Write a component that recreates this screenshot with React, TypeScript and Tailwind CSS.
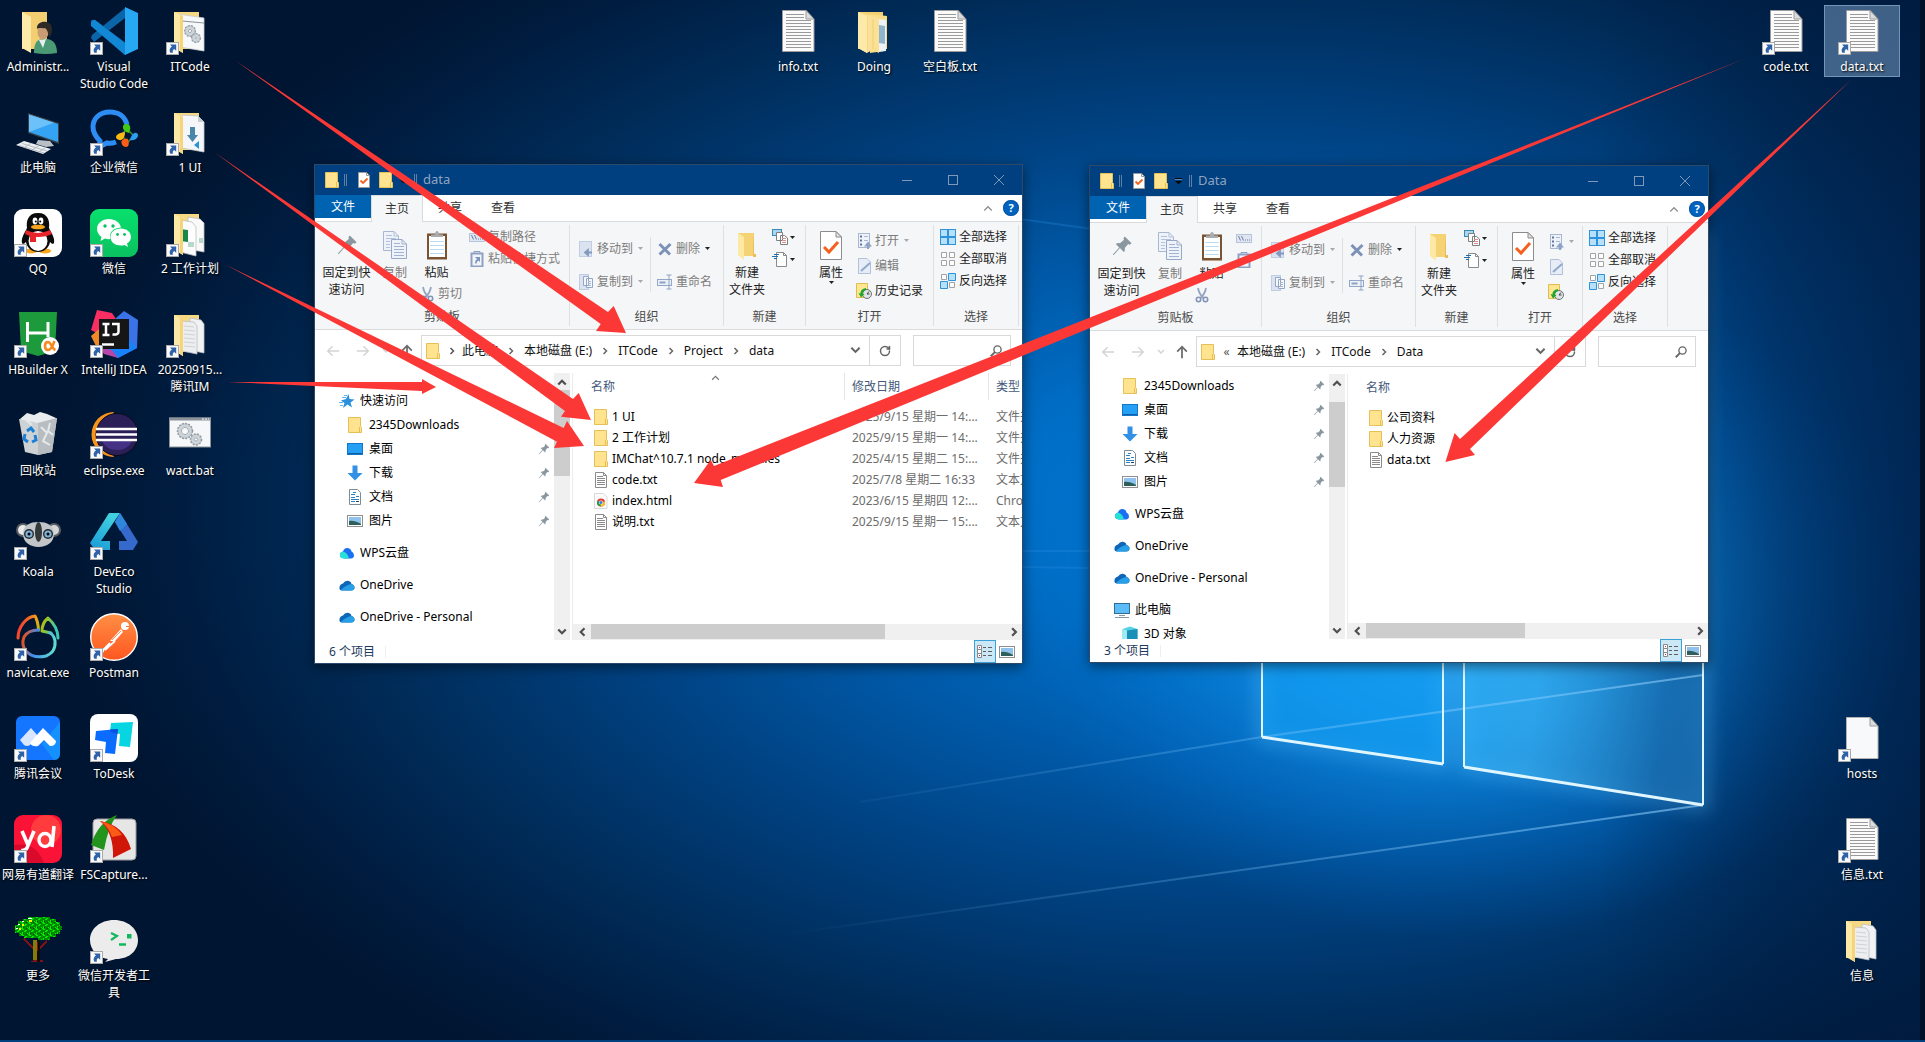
import React from "react";
import { RotateCw } from "lucide-react";

type P = { className?: string };

/* ---------- wallpaper ---------- */

function Wallpaper() {
  return (
    <svg className="absolute inset-0 h-full w-full" viewBox="0 0 1925 1042" preserveAspectRatio="none" aria-hidden="true">
      <defs>
        <radialGradient id="wpBase" gradientUnits="userSpaceOnUse" cx="0" cy="0" r="1" gradientTransform="translate(1240 510) scale(1190 700)">
          <stop offset="0" stopColor="#007bd9" />
          <stop offset="0.2" stopColor="#006ec6" />
          <stop offset="0.38" stopColor="#0058a6" />
          <stop offset="0.55" stopColor="#004282" />
          <stop offset="0.75" stopColor="#002c59" />
          <stop offset="0.9" stopColor="#001c3f" />
          <stop offset="1" stopColor="#001531" />
        </radialGradient>
        <radialGradient id="wpGlow" gradientUnits="userSpaceOnUse" cx="0" cy="0" r="1" gradientTransform="translate(1460 600) scale(460 340)">
          <stop offset="0" stopColor="#2aaaf6" />
          <stop offset="0.4" stopColor="#108fe6" stopOpacity="0.85" />
          <stop offset="0.75" stopColor="#0474cf" stopOpacity="0.38" />
          <stop offset="1" stopColor="#0060b5" stopOpacity="0" />
        </radialGradient>
        <linearGradient id="wpRight" gradientUnits="userSpaceOnUse" x1="1600" x2="1925" y1="0" y2="0">
          <stop offset="0" stopColor="#001c42" stopOpacity="0" />
          <stop offset="0.55" stopColor="#001c42" stopOpacity="0.45" />
          <stop offset="1" stopColor="#001c42" stopOpacity="0.7" />
        </linearGradient>
        <linearGradient id="beam" gradientUnits="userSpaceOnUse" x1="780" x2="1703" y1="0" y2="0">
          <stop offset="0" stopColor="#7cc4ff" stopOpacity="0" />
          <stop offset="1" stopColor="#8fd0ff" stopOpacity="0.6" />
        </linearGradient>
        <linearGradient id="paneR" x1="0" x2="1" y1="0" y2="0.3">
          <stop offset="0" stopColor="#27aefa" stopOpacity="0.7" />
          <stop offset="0.5" stopColor="#3fb4f2" stopOpacity="0.6" />
          <stop offset="1" stopColor="#1b70b2" stopOpacity="0.8" />
        </linearGradient>
        <filter id="soft" x="-30%" y="-30%" width="160%" height="160%">
          <feGaussianBlur stdDeviation="9" />
        </filter>
      </defs>
      <rect width="1925" height="1042" fill="#001531" />
      <rect width="1925" height="1042" fill="url(#wpBase)" />
      <rect width="1925" height="1042" fill="url(#wpGlow)" />
      <rect x="1600" width="325" height="1042" fill="url(#wpRight)" />
      <g stroke="#6cc8ff" strokeWidth="10" fill="none" opacity="0.4" filter="url(#soft)">
        <path d="M1262 260V737L1443 764V260M1464 260V767L1703 805V230" />
      </g>
      <path d="M1262 260V737L1443 764V250Z" fill="#12a0f5" fillOpacity="0.6" />
      <path d="M1464 250V767L1703 805V220Z" fill="url(#paneR)" />
      <g stroke="url(#beam)" strokeWidth="2" fill="none">
        <path d="M780 935L1703 805" />
        <path d="M860 802L1262 737L1703 675" />
      </g>
      <g stroke="#2a8fe0" strokeOpacity="0.3" strokeWidth="2" fill="none">
        <path d="M1020 219L1092 229M1020 551H1092M1020 567L1092 568" />
      </g>
      <g stroke="#dff6ff" strokeWidth="2" fill="none">
        <path d="M1262 260V737M1443 764V250M1464 250V767M1703 805V220" />
        <path d="M1262 737L1443 764M1464 767L1703 805" strokeWidth="3" />
      </g>
      <rect x="1920" width="5" height="1040" fill="#001029" />
      <rect y="1040" width="1925" height="2" fill="#00407c" />
    </svg>
  );
}

/* ---------- desktop icons, 48 x 48 ---------- */

const Big = ({ children }: { children: React.ReactNode }) => (
  <svg className="h-12 w-12" viewBox="0 0 48 48" aria-hidden="true">{children}</svg>
);

const Badge = () => (
  <svg className="absolute bottom-0 left-0 h-[13px] w-[13px]" viewBox="0 0 13 13" aria-hidden="true">
    <rect x="0.5" y="0.5" width="12" height="12" fill="#fafafa" stroke="#a9a9a9" />
    <path d="M4 2.5H10.2V8.700L8.200 6.900C6.800 7.800 6.500 9 6.900 10.800H4.300C3 8.200 3.600 6 5.900 4.500Z" fill="#2f62a8" />
  </svg>
);

const gear = (cx: number, cy: number, r: number, w: number) => (
  <g fill="none" stroke="#8f9aa3">
    <circle cx={cx} cy={cy} r={r} strokeWidth={w} strokeDasharray="1.6 1.4" />
    <circle cx={cx} cy={cy} r={r - 1.500} strokeWidth="3" stroke="#cdd4d9" />
    <circle cx={cx} cy={cy} r={r - 3.400} strokeWidth="0.8" />
    <circle cx={cx} cy={cy} r={r + 0.200} strokeWidth="0.600" />
  </g>
);

const FolderBase = ({ children }: { children?: React.ReactNode }) => (
  <Big>
    <path d="M8 5H33V42H8Z" fill="#f7d983" />
    {children}
    <path d="M8 5L17 9V46L8 41Z" fill="#fde9a6" />
    <path d="M8 5L17 9V46L14 44V8Z" fill="#f6d47a" />
  </Big>
);

const icons: Record<string, React.ReactNode> = {
  admin: (
    <Big>
      <path d="M8 5H33V42H8Z" fill="#f3cf72" />
      <path d="M8 5L17 10V46L8 41Z" fill="#fdeaaa" />
      <path d="M20 46C20 37 22 33 28 32C36 31 43 34 43 46Q32 48 20 46Z" fill="#4a9a76" />
      <path d="M25 33L29 41L32 32Z" fill="#e8eef0" />
      <ellipse cx="29" cy="25" rx="5.500" ry="7.500" fill="#c79c72" />
      <path d="M23 22C22 13 38 12 38 22C38 26 37 29 35 30C34 25 33 22 31 21C28 22 25 20 23 22Z" fill="#2c2926" />
    </Big>
  ),
  vscode: (
    <Big>
      <path d="M1 15Q1 12 5 13L37 37L35 48L2 19Z" fill="#0a7bc4" />
      <path d="M1 31L4 35L35 11V1L2 28Z" fill="#0a66a9" />
      <path d="M1 15L5 13L37 38L35 48L1 19Z" fill="#1287d3" />
      <path d="M35 0L48 6V42L35 48Z" fill="#27a8f3" />
    </Big>
  ),
  itcode: (
    <FolderBase>
      <path d="M12 7L38 11V44L14 40Z" fill="#f7f8f9" stroke="#c8ccd0" strokeWidth="0.800" />
      <path d="M16 14L38 16" stroke="#8b9298" />
      {gear(24, 24, 5, 2)}{gear(30, 31, 4, 2)}
    </FolderBase>
  ),
  ui: (
    <FolderBase>
      <path d="M16 7L32 8L38 14V44L16 40Z" fill="#f4f6f9" stroke="#c2c7cc" strokeWidth="0.800" />
      <path d="M32 8V14H38Z" fill="#c7cbd0" />
      <path d="M24 19H29V27H32L26.500 34L21 27H24Z" fill="#4a86a8" />
      <path d="M28 37L33 33V41Z" fill="#2894d2" />
    </FolderBase>
  ),
  plan: (
    <FolderBase>
      <path d="M22 8L34 10L38 14V43L22 40Z" fill="#fafafa" stroke="#b9bec3" strokeWidth="0.800" />
      <path d="M14 11L26 13L30 18V47L14 43Z" fill="#fdfdfd" stroke="#b9bec3" strokeWidth="0.800" />
      <path d="M14 20L22 21V33L14 32Z" fill="#17884a" />
      <path d="M22 33H28V38H22ZM33 29H37V34H33Z" fill="#b8d8cb" />
    </FolderBase>
  ),
  docs: (
    <FolderBase>
      <path d="M24 8L35 10L38 14V43L24 40Z" fill="#f1f2f3" stroke="#babfc4" strokeWidth="0.800" />
      <path d="M16 11L28 12L31 16V44L16 41Z" fill="#eceeef" stroke="#b9bec3" strokeWidth="0.800" />
      <path d="M18 16L28 17M18 20L29 21M18 24L29 25M18 28L29 29M18 32L29 33M18 36L29 37" stroke="#d0d3d6" />
    </FolderBase>
  ),
  doing: (
    <Big>
      <path d="M8 5H33V42H8Z" fill="#f3cf72" />
      <path d="M20 7L37 9V42H34V44L20 46Z" fill="#f9dc85" />
      <path d="M28 12L36 13V44L28 45Z" fill="#edf2f6" />
      <path d="M29 18L35 19V37L29 36Z" fill="#8fb5cc" />
      <path d="M8 5L29 11V46L27 45V40L17 46V46L8 41Z" fill="#fbe197" />
      <path d="M17 10V45M23 12V42" stroke="#eec96a" strokeWidth="0.800" />
      <path d="M8 5L17 10V46L8 41Z" fill="#fdeaaa" />
    </Big>
  ),
  pc: (
    <Big>
      <path d="M14 5L45 15V36L14 25Z" fill="#3a4248" />
      <path d="M15 6.500L44 16V34L15 24Z" fill="#35a3f4" />
      <path d="M15 6.500L40 14.700L15 24Z" fill="#6cc1fb" />
      <path d="M24 32L36 33L40 38L32 39L22 36Z" fill="#b9bfc4" />
      <path d="M2 37L10 33L37 41L29 46Z" fill="#eceff1" />
      <path d="M5 37.500L30 45M8 35.500L33 43M10 40L17 35M18 42L25 37.500M25 44L31 40" stroke="#a8afb5" strokeWidth="0.800" />
    </Big>
  ),
  wecom: (
    <Big>
      <path d="M37 17C35 8 28 4 20 4C8 4 3 12 3 19C3 26 7 30 10 33L9 39L17 35Q21 36 26 34" fill="none" stroke="#2e8df5" strokeWidth="5" />
      <path d="M31 27L37 21L44 28L38 34Z" fill="none" stroke="#3c8c3a" strokeWidth="1.500" />
      <path d="M39 25C32 24 31 16 36 16C41 16 41 20 39 25Z" fill="#43c717" />
      <path d="M35 24C35 31 31 34 27 31C24 28 28 25 35 24Z" fill="#fdb913" />
      <path d="M40 32C45 33 48 30 48 27C47 23 42 24 40 32Z" fill="#2c9df0" />
      <path d="M38 31C31 30 30 35 33 38C38 41 40 37 38 31Z" fill="#fb5c16" />
    </Big>
  ),
  qq: (
    <Big>
      <rect width="48" height="48" rx="9" fill="#fff" />
      <ellipse cx="17" cy="42" rx="6" ry="2.500" fill="#f9a51b" /><ellipse cx="31" cy="42" rx="6" ry="2.500" fill="#f9a51b" />
      <path d="M24 4C14 4 12 12 13 19C10 25 7 29 8 34C9 36 11 34 12 33C13 39 18 43 24 43C30 43 35 39 36 33C37 34 39 36 40 34C41 29 38 25 35 19C36 12 34 4 24 4Z" fill="#0b0b0b" />
      <ellipse cx="24" cy="32" rx="9.500" ry="10" fill="#fff" />
      <ellipse cx="21" cy="12" rx="2.400" ry="3.400" fill="#fff" /><ellipse cx="27" cy="12" rx="2.400" ry="3.400" fill="#fff" />
      <circle cx="21.800" cy="12.500" r="1" /><circle cx="26.200" cy="12.500" r="1" />
      <ellipse cx="24" cy="18" rx="7" ry="2.300" fill="#f9a51b" />
      <path d="M12 21Q24 27 36 21L38 25Q31 28.500 22 28V33H16V27L11 25Z" fill="#e8242b" />
    </Big>
  ),
  wechat: (
    <Big>
      <defs><linearGradient id="wc" x1="0" x2="0" y1="0" y2="1"><stop stopColor="#08e06d" /><stop offset="1" stopColor="#0ac160" /></linearGradient></defs>
      <rect width="48" height="48" rx="9" fill="url(#wc)" />
      <path d="M19 10C12 10 7 14.500 7 20C7 23.500 9 26 11.500 28L10.500 32L15 29.500Q18 30.500 20.500 30Q18 20 31 18.500C30 13.500 25 10 19 10Z" fill="#fff" />
      <path d="M31 19.500C25 19.500 20.500 23 20.500 28C20.500 33 25 36.500 31 36.500Q33 36.500 34.500 36L38 38L37 34.500C39.500 33 41 30.500 41 28C41 23 36.500 19.500 31 19.500Z" fill="#fff" />
      <g fill="#0bbf62"><circle cx="15" cy="17" r="1.700" /><circle cx="23" cy="17" r="1.700" /><circle cx="27.500" cy="25.500" r="1.400" /><circle cx="34.500" cy="25.500" r="1.400" /></g>
    </Big>
  ),
  hb: (
    <Big>
      <path d="M5 2H43L41 41L24 46L7 41Z" fill="#1c9a3c" />
      <path d="M13.500 12V32M13.500 23H34M34 12V27" fill="none" stroke="#fff" strokeWidth="3" />
      <circle cx="36" cy="36" r="9" fill="#fff" />
      <path d="M40.500 31C38 38 36 40 34 40C30 40 30 32 34 32C37 32 38 39 41.500 40" fill="none" stroke="#f58a1f" strokeWidth="2.600" />
    </Big>
  ),
  idea: (
    <Big>
      <path d="M7 0L22 3L28 12L20 30L1 20Z" fill="#fb2e63" />
      <path d="M1 26L9 19L16 34L6 36Z" fill="#f08a28" />
      <path d="M34 1L48 10L47 38L28 48L20 40L26 8Z" fill="#3a72e8" />
      <path d="M28 48L47 38L40 30L12 38Z" fill="#1683fa" />
      <path d="M10 38L22 40L28 48L14 44Z" fill="#b845a8" />
      <rect x="9" y="9" width="30" height="30" fill="#161616" />
      <path d="M12.500 14H19.500M16 14V25M12.500 25H19.500M22 14H28.500V22Q28.500 25 22.500 24.500" fill="none" stroke="#fff" strokeWidth="2.500" />
      <path d="M12 34.500H24" stroke="#fff" strokeWidth="2.500" />
    </Big>
  ),
  bin: (
    <Big>
      <path d="M6 8L13 2L20 4L26 1L33 3L42 7L40 13H8Z" fill="#e9ecee" />
      <path d="M5 8L24 12L43 7L38 41L24 44L11 41Z" fill="#cdd2d5" />
      <path d="M24 12L43 7L38 41L24 44Z" fill="#b7bdc1" />
      <path d="M27 16L33 22L29 30L36 34M12 9L18 14M36 12L34 20L39 24" fill="none" stroke="#e6e9eb" strokeWidth="2" />
      <path d="M13 20L17 17L20 21M21 24L22 29L18 31M14 31L10 28L11 23" fill="none" stroke="#1b7fd6" strokeWidth="3" />
    </Big>
  ),
  eclipse: (
    <Big>
      <path d="M24 1A22 22 0 0 0 24 46L12 24Z" fill="#f7941e" />
      <circle cx="27" cy="23.500" r="21" fill="#2b1f57" stroke="#0c0a1c" />
      <path d="M12 30H42Q38 39 27 39Q16 39 12 30Z" fill="#453285" />
      <path d="M6 18H47M6 23.500H47M6 29H47" stroke="#fff" strokeWidth="2.600" />
    </Big>
  ),
  bat: (
    <Big>
      <rect x="3.500" y="7" width="41" height="29" fill="#f6f7f8" stroke="#8b9298" />
      <path d="M3 8H45" stroke="#8b9298" strokeWidth="3" />
      <path d="M36 8H43" stroke="#fff" strokeDasharray="2 1" />
      {gear(19, 20, 7, 2.500)}{gear(30, 28.500, 5, 2.500)}
    </Big>
  ),
  koala: (
    <Big>
      <circle cx="9" cy="18" r="7" fill="#5a5e61" /><circle cx="40" cy="18" r="7" fill="#5a5e61" />
      <circle cx="9" cy="18" r="5" fill="#e9eaeb" /><circle cx="40" cy="18" r="5" fill="#d4d6d8" />
      <path d="M9 22C9 13 16 10 24.500 10C33 10 40 13 40 22C40 30 33 35 24.500 35C16 35 9 30 9 22Z" fill="#c3c6c9" />
      <ellipse cx="24.500" cy="20" rx="3.500" ry="10" fill="#33383b" />
      <circle cx="15" cy="22" r="5" fill="#23292e" /><circle cx="34" cy="22" r="5" fill="#23292e" />
      <circle cx="15" cy="22" r="3.600" fill="#7fb2d8" /><circle cx="34" cy="22" r="3.600" fill="#7fb2d8" />
      <circle cx="15" cy="22" r="1.500" /><circle cx="34" cy="22" r="1.500" />
    </Big>
  ),
  deveco: (
    <Big>
      <defs><linearGradient id="de" x1="0" x2="0.500" y1="1" y2="0"><stop stopColor="#1697d6" /><stop offset="1" stopColor="#41d0e0" /></linearGradient></defs>
      <path d="M19 1H30L11 29H20V38H5L0 31Z" fill="url(#de)" />
      <path d="M30 1L48 30L43 38H29V29H37L25 10Z" fill="#3569cc" />
      <path d="M30 1L37 12L30 19L25 10Z" fill="#2f87dd" />
    </Big>
  ),
  navicat: (
    <Big>
      <defs>
        <linearGradient id="nv" x1="0" x2="1" y1="0" y2="0.200"><stop stopColor="#f5143c" /><stop offset="0.450" stopColor="#f7a014" /><stop offset="0.700" stopColor="#9fc21f" /><stop offset="1" stopColor="#3fc9b0" /></linearGradient>
        <linearGradient id="nv2" x1="0" x2="1" y1="0.300" y2="0.500"><stop stopColor="#e8501c" /><stop offset="0.400" stopColor="#3f8af0" /><stop offset="1" stopColor="#5fdcd2" /></linearGradient>
      </defs>
      <g fill="none" strokeWidth="3" strokeLinejoin="round" strokeLinecap="round">
        <path d="M4 25C4 14 12 4 21 3Q24 8 24.500 17M28 18Q28 10 34 5Q44 14 44 25M28 18L37 20" stroke="url(#nv)" />
        <path d="M24.500 17Q14 17 10 24Q7 32 12 38Q19 46 32 43Q42 39 41 28Q40 22 36 20" stroke="url(#nv2)" />
      </g>
    </Big>
  ),
  postman: (
    <Big>
      <defs><linearGradient id="pm" x1="0" x2="0" y1="0" y2="1"><stop stopColor="#ff8f45" /><stop offset="1" stopColor="#ff5620" /></linearGradient></defs>
      <circle cx="24" cy="24" r="23.300" fill="url(#pm)" stroke="#fff" strokeWidth="1.400" />
      <circle cx="35" cy="13" r="4" fill="#fff" />
      <path d="M31 16L33 19L25 28L20 28Z" fill="#fff" />
      <path d="M25 28L15 37M20 30L14 36L12 40" stroke="#fff" strokeWidth="1.800" fill="none" />
      <path d="M31 18L22 27" stroke="#ff7436" strokeWidth="0.800" />
      <path d="M36 13.500H39" stroke="#ff7436" />
    </Big>
  ),
  meeting: (
    <Big>
      <rect x="2" y="2" width="44" height="44" rx="6" fill="#1476ff" />
      <path d="M46 8V40Q46 46 40 46L28 30Z" fill="#169bff" opacity="0.700" />
      <path d="M6 26L17 14L24 22L16 31Q13 33 10 31Z" fill="#d9e6ff" />
      <path d="M16 29L29 14L42 27Q42 32 36 32L30 26L24 32Q18 33 16 29Z" fill="#fff" />
    </Big>
  ),
  todesk: (
    <Big>
      <rect width="48" height="48" rx="8" fill="#fff" />
      <path d="M21 9L43 8L40 33L29 32L30 20L20 18Z" fill="#07d5e2" />
      <path d="M6 17L28 15L25 40L15 39L16 28L5 26Z" fill="#0a6cff" />
      <path d="M20 15.500L28 15L27.500 20L20.500 18Z" fill="#0754d8" />
    </Big>
  ),
  youdao: (
    <Big>
      <rect width="48" height="48" rx="9" fill="#fb1237" />
      <circle cx="32" cy="15" r="15" fill="#ff3b3d" /><path d="M0 30Q22 26 30 48H9Q0 48 0 39Z" fill="#d90a2c" />
      <path d="M8 16L14 30M20 16L13 33Q11 36 7 35.500M40 11L38 32" fill="none" stroke="#fff" strokeWidth="3.600" />
      <ellipse cx="31" cy="25" rx="6" ry="6.500" fill="none" stroke="#fff" strokeWidth="3.400" />
    </Big>
  ),
  fs: (
    <Big>
      <rect x="3" y="4" width="43" height="41" rx="4" fill="#e6e6e6" stroke="#9a9a9a" />
      <path d="M27 0Q18 12 14 35L1 30Q8 7 27 0Z" fill="#22931b" />
      <path d="M10 6Q34 10 41 34L23 43Q24 18 10 6Z" fill="#cf1608" />
      <path d="M10 6Q25 9 32 20L22 22Q18 11 10 6Z" fill="#fb5a17" />
    </Big>
  ),
  tree: (
    <svg className="h-12 w-12" viewBox="0 0 48 48" aria-hidden="true" shapeRendering="crispEdges">
      <defs>
        <pattern id="leaf" width="7" height="6" patternUnits="userSpaceOnUse">
          <rect width="7" height="6" fill="#008a00" />
          <path d="M0 0H2V1H3V2H1V1H0ZM4 2H6V3H5V4H4ZM1 4H2V6H1ZM6 5H7V6H6ZM3 3H4V4H3Z" fill="#00f000" />
          <path d="M5 0H6V1H5ZM2 5H3V6H2Z" fill="#004800" />
        </pattern>
      </defs>
      <path d="M10 22L19 31V26H25V31L33 23V26L25 34V44H29V46H17V45H19V34L9 24Z" fill="#7d1216" />
      <path d="M19 24H23V44H19Z" fill="#857b0a" /><path d="M24 24H26V46H23Z" fill="#12090a" />
      <path d="M14 1H36V3H42V6H46V10H48V14H46V18H42V21H36V24H24V22H10V20H5V17H1V9H4V5H9V3H14Z" fill="url(#leaf)" />
      <path d="M14 2H18M8 5H10M4 8H6M2 12H4" stroke="#fff" /><path d="M15 5H18M8 9H10M5 13H7" stroke="#f4f400" strokeWidth="2" />
    </svg>
  ),
  wxdev: (
    <Big>
      <path d="M24 4C10 4 0 13 0 24C0 34 8 42 18 43L15 46L26 43C40 43 48 34 48 24C48 13 38 4 24 4Z" fill="#ececec" />
      <path d="M21 17L27 20L21 24" fill="none" stroke="#12b85c" strokeWidth="2.200" />
      <path d="M29 28.500H36" stroke="#12b85c" strokeWidth="2.500" /><rect x="37" y="18" width="4.500" height="4.500" fill="#12b85c" />
    </Big>
  ),
  txt: (
    <Big>
      <path d="M8.500 3.500H32L40 12V44.500H8.500Z" fill="#fbfbfb" stroke="#9b9b9b" />
      <path d="M32 3.500V12H40Z" fill="#dcdcdc" stroke="#9b9b9b" />
      <path d="M12 7.500H30M12 10.500H30M12 13.500H37M12 16.500H37M12 19.500H37M12 22.500H37M12 25.500H37M12 28.500H37M12 31.500H37M12 34.500H37M12 37.500H37M12 40.500H37" stroke="#9a9a9a" />
    </Big>
  ),
  blank: (
    <Big>
      <path d="M8.500 3.500H32L40 12V44.500H8.500Z" fill="#f8f9fa" stroke="#b3b3b3" />
      <path d="M32 3.500V12H40Z" fill="#dcdcdc" stroke="#9b9b9b" />
    </Big>
  ),
};

type DeskItem = { icon: string; lines: string[]; place: string; link?: boolean; selected?: boolean };

const desk: DeskItem[] = [
  { icon: "admin", lines: ["Administr..."], place: "col-start-1 row-start-1" },
  { icon: "pc", lines: ["此电脑"], place: "col-start-1 row-start-2" },
  { icon: "qq", lines: ["QQ"], place: "col-start-1 row-start-3", link: true },
  { icon: "hb", lines: ["HBuilder X"], place: "col-start-1 row-start-4", link: true },
  { icon: "bin", lines: ["回收站"], place: "col-start-1 row-start-5" },
  { icon: "koala", lines: ["Koala"], place: "col-start-1 row-start-6", link: true },
  { icon: "navicat", lines: ["navicat.exe"], place: "col-start-1 row-start-7", link: true },
  { icon: "meeting", lines: ["腾讯会议"], place: "col-start-1 row-start-8", link: true },
  { icon: "youdao", lines: ["网易有道翻译"], place: "col-start-1 row-start-9", link: true },
  { icon: "tree", lines: ["更多"], place: "col-start-1 row-start-10" },
  { icon: "vscode", lines: ["Visual", "Studio Code"], place: "col-start-2 row-start-1", link: true },
  { icon: "wecom", lines: ["企业微信"], place: "col-start-2 row-start-2", link: true },
  { icon: "wechat", lines: ["微信"], place: "col-start-2 row-start-3", link: true },
  { icon: "idea", lines: ["IntelliJ IDEA"], place: "col-start-2 row-start-4", link: true },
  { icon: "eclipse", lines: ["eclipse.exe"], place: "col-start-2 row-start-5", link: true },
  { icon: "deveco", lines: ["DevEco", "Studio"], place: "col-start-2 row-start-6", link: true },
  { icon: "postman", lines: ["Postman"], place: "col-start-2 row-start-7", link: true },
  { icon: "todesk", lines: ["ToDesk"], place: "col-start-2 row-start-8", link: true },
  { icon: "fs", lines: ["FSCapture..."], place: "col-start-2 row-start-9", link: true },
  { icon: "wxdev", lines: ["微信开发者工", "具"], place: "col-start-2 row-start-10", link: true },
  { icon: "itcode", lines: ["ITCode"], place: "col-start-3 row-start-1", link: true },
  { icon: "ui", lines: ["1 UI"], place: "col-start-3 row-start-2", link: true },
  { icon: "plan", lines: ["2 工作计划"], place: "col-start-3 row-start-3", link: true },
  { icon: "docs", lines: ["20250915...", "腾讯IM"], place: "col-start-3 row-start-4", link: true },
  { icon: "bat", lines: ["wact.bat"], place: "col-start-3 row-start-5" },
  { icon: "txt", lines: ["info.txt"], place: "col-start-11 row-start-1" },
  { icon: "doing", lines: ["Doing"], place: "col-start-12 row-start-1" },
  { icon: "txt", lines: ["空白板.txt"], place: "col-start-[13] row-start-1" },
  { icon: "txt", lines: ["code.txt"], place: "col-start-[24] row-start-1", link: true },
  { icon: "txt", lines: ["data.txt"], place: "col-start-[25] row-start-1", link: true, selected: true },
  { icon: "blank", lines: ["hosts"], place: "col-start-[25] row-start-8", link: true },
  { icon: "txt", lines: ["信息.txt"], place: "col-start-[25] row-start-9", link: true },
  { icon: "docs", lines: ["信息"], place: "col-start-[25] row-start-10" },
];

function DesktopIcon({ item }: { item: DeskItem }) {
  return (
    <button
      className={`${item.place} flex flex-col items-center gap-[3px] self-start border pt-px pb-px ${
        item.selected ? "border-[#7396b8] bg-[#7fa6cc]/50" : "border-transparent"
      }`}
    >
      <span className="relative block h-12 w-12">
        {icons[item.icon]}
        {item.link && <Badge />}
      </span>
      <span className="flex flex-col items-center leading-[17px] whitespace-nowrap text-white [text-shadow:1px_1px_2px_#000]">
        {item.lines.map((l) => (
          <span key={l}>{l}</span>
        ))}
      </span>
    </button>
  );
}

/* ---------- small glyphs ---------- */

const S = ({ children, className = "h-4 w-4" }: P & { children: React.ReactNode }) => (
  <svg className={`shrink-0 ${className}`} viewBox="0 0 16 16" fill="none" aria-hidden="true">{children}</svg>
);
const Folder = ({ className }: P) => (
  <S className={className}>
    <path d="M1.500 0.500H13.500V9.500L14.500 10.500V15.500H1.500Z" fill="#ffe38f" stroke="#e5bf58" />
    <path d="M12.500 10V15.500" stroke="#e5bf58" />
  </S>
);
const TxtFile = () => (
  <S><path d="M2.500 0.500H10.500L13.500 3.500V15.500H2.500Z" fill="#fff" stroke="#8a8a8a" /><path d="M10.500 0.500V3.500H13.500M4 4.500H10M4 6.500H12M4 8.500H12M4 10.500H12M4 12.500H12" stroke="#8a8a8a" /></S>
);
const HtmlFile = () => (
  <S>
    <path d="M1.500 0.500H10.500L14 4V15.500H1.500Z" fill="#fbfbfb" stroke="#d9d9d9" />
    <circle cx="8" cy="9.500" r="4" fill="#e33b2e" /><path d="M8 9.500L11.900 8.500A4 4 0 0 1 7.500 13.500Z" fill="#fbc116" /><path d="M8 9.500L7.500 13.500A4 4 0 0 1 4.500 7.500Z" fill="#25a152" />
    <circle cx="8" cy="9.500" r="2" fill="#fff" /><circle cx="8" cy="9.500" r="1.500" fill="#3b78e7" />
  </S>
);
const Page = ({ className = "h-4 w-4" }: P) => (
  <S className={className}><path d="M2.500 0.500H10.500L13.500 3.500V15.500H2.500Z" fill="#fff" stroke="#9a9a9a" /><path d="M10.500 0.500V3.500H13.500" stroke="#9a9a9a" /><path d="M4.500 8.500L7 11L11.500 6.500" stroke="#f4611f" strokeWidth="1.800" /></S>
);
const Caret = ({ muted }: { muted?: boolean }) => (
  <svg className="h-[3px] w-[5px] shrink-0" viewBox="0 0 5 3" aria-hidden="true"><path d="M0 0H5L2.500 3Z" fill={muted ? "#a9a9a9" : "#222"} /></svg>
);
const Pin = ({ className }: P) => (
  <S className={className}><path d="M10 1L15 6L13.500 7L12.500 6.500L10 9.500Q10.500 11.500 9.500 12.500L6.500 9.500L2 14.500L1.500 14.500V14L6 9L3.500 6.500Q5 5.500 6.500 6L9.500 3.500L9 2.500Z" fill="#8a979f" /></S>
);
const Chev = ({ d, className = "h-2 w-2", w = "1.5" }: P & { d: "up" | "down" | "left" | "right"; w?: string }) => {
  const paths = { up: "M1 6L4 3L7 6", down: "M1 2L4 5L7 2", left: "M6 1L3 4L6 7", right: "M2.500 1L5.500 4L2.500 7" };
  return <svg className={`shrink-0 ${className}`} viewBox="0 0 8 8" fill="none" aria-hidden="true"><path d={paths[d]} stroke="currentColor" strokeWidth={w} /></svg>;
};

const CopyTwo = ({ className }: P) => (
  <svg className={`shrink-0 ${className}`} viewBox="0 0 26 30" fill="none" aria-hidden="true">
    <path d="M1.500 1.500H12L16.500 6V20.500H1.500Z" fill="#eef2f9" stroke="#a9b7d2" /><path d="M12 1.500V6H16.500M4 5.500H10M4 8.500H14M4 11.500H8M4 14.500H8M4 17.500H8" stroke="#b5c1d9" />
    <path d="M9.500 9.500H20L24.500 14V28.500H9.500Z" fill="#eef2f9" stroke="#97a8c8" /><path d="M20 9.500V14H24.500M12 13.500H18M12 16.500H22M12 19.500H22M12 22.500H22M12 25.500H22" stroke="#a3b2cf" />
  </svg>
);
const Clipboard = () => (
  <svg className="h-[30px] w-[22px] shrink-0" viewBox="0 0 22 30" fill="none" aria-hidden="true">
    <rect x="1" y="3.500" width="20" height="26" fill="#7b5232" /><rect x="3" y="6" width="16" height="21" fill="#fff" />
    <path d="M4 11.500H18M4 15.500H18M4 19.500H18M4 23.500H18" stroke="#b9dcf2" /><path d="M5 7V4.500H9Q9 1 11 1Q13 1 13 4.500H17V7Z" fill="#a9adb1" />
  </svg>
);
const BigFolder = () => (
  <svg className="h-[30px] w-5 shrink-0" viewBox="0 0 20 30" aria-hidden="true">
    <path d="M1 3H17V24L19 26H6Z" fill="#f5d273" /><path d="M17 16V24H19V27H16V3Z" fill="#e7be5a" /><path d="M1 3L7 7V30L1 25Z" fill="#fde9a3" />
  </svg>
);
const BigCheck = () => (
  <svg className="h-[30px] w-[22px] shrink-0" viewBox="0 0 22 30" fill="none" aria-hidden="true">
    <path d="M0.500 1.500H16L21.500 7V29.500H0.500Z" fill="#fff" stroke="#8c8c8c" /><path d="M16 1.500V7H21.500Z" fill="#e3e3e3" stroke="#8c8c8c" /><path d="M4 17L9 22L18 12" stroke="#f4611f" strokeWidth="3" />
  </svg>
);
const Scissors = () => (
  <S><path d="M4 1Q5 7 9.500 11M12 1Q11 7 6.500 11" stroke="#96a6c2" strokeWidth="1.800" /><circle cx="4.500" cy="12.500" r="2.200" stroke="#8295b8" strokeWidth="1.600" /><circle cx="11.500" cy="12.500" r="2.200" stroke="#8295b8" strokeWidth="1.600" /></S>
);
const PathIcon = () => (
  <S><rect x="0.500" y="4.500" width="15" height="8" fill="#dfe6f2" stroke="#b7c3da" /><path d="M2.500 6L4.500 10.500M5.500 6L7.500 10.500M9 10H10M11 10H12M13 10H14" stroke="#6f7f9f" /></S>
);
const PasteLink = () => (
  <S><rect x="2.500" y="2.500" width="11" height="13" fill="#f1f5fb" stroke="#8fa1c2" strokeWidth="2" /><path d="M5 2.500V0.500H11V2.500" stroke="#8fa1c2" /><path d="M6 6H11V11L9.500 9.500Q7.500 10.500 7.500 12.500H6Q5.500 10 8 8Z" fill="#7d93bb" /></S>
);
const MoveTo = () => (
  <S><rect x="1.500" y="0.500" width="12" height="15" fill="#dbe3f0" stroke="#c0cde2" /><path d="M14 11.500H9M10 9L7 11.500L10 14Z" stroke="#8499c0" strokeWidth="1.800" fill="#8499c0" /></S>
);
const CopyTo = () => (
  <S><rect x="1.500" y="0.500" width="9" height="15" fill="#dbe3f0" stroke="#c0cde2" /><path d="M5.500 2.500H10.500V11.500H5.500ZM8.500 4.500H14.500V13.500H8.500Z" fill="#f4f7fb" stroke="#93a6c8" /><path d="M10 7.500H13M10 9.500H13M10 11.500H13" stroke="#a9b7d2" /></S>
);
const Cross = () => <S><path d="M2.500 3L13 13.500M13.500 3L2.500 13.500" stroke="#7d92b8" strokeWidth="3" /></S>;
const Rename = () => (
  <S><rect x="0.500" y="5.500" width="14" height="6" fill="#edf1f8" stroke="#93a6c8" /><rect x="2.500" y="7.500" width="6" height="2" fill="#8da2c6" /><path d="M9.500 1H14.500M12 1V15M9.500 15H14.500" stroke="#8da2c6" /></S>
);
const NewItem = () => (
  <S><rect x="0.500" y="0.500" width="9" height="6" fill="#a8d7ef" stroke="#3c89b5" /><path d="M4.500 3.500H10.500V11.500H4.500ZM8.500 6.500H12.500L15.500 9V15.500H8.500Z" fill="#fff" stroke="#7f7f7f" /><path d="M10 9.500H14M10 11.500H14M10 13.500H14" stroke="#db8f8f" /></S>
);
const EasyAccess = () => (
  <S><path d="M4.500 1.500H11.500L14.500 4.500V15.500H4.500Z" fill="#fff" stroke="#8a8a8a" /><path d="M11.500 1.500V4.500H14.500" stroke="#8a8a8a" /><path d="M2 3.500H7M0 5.500H6M2 7.500H5" stroke="#1d6fb3" /></S>
);
const OpenI = () => (
  <S><rect x="2.500" y="0.500" width="11" height="14" fill="#eef2f9" stroke="#a9b7d2" /><path d="M4 3.500H6M4 7.500H6M4 11.500H6" stroke="#5f759e" strokeWidth="2" /><path d="M8 3.500H12M8 7.500H12" stroke="#a9b7d2" /><path d="M12 16V12M10 12.500L12 10L14 12.500Z" stroke="#8da2c6" strokeWidth="2" fill="#8da2c6" /></S>
);
const EditI = () => (
  <S><path d="M2.500 0.500H11L14.500 4V15.500H2.500Z" fill="#e6edf7" stroke="#b2c0d9" /><path d="M5 13L14 5" stroke="#93a8cd" strokeWidth="2" /></S>
);
const History = () => (
  <S><path d="M0.500 0.500H11.500V14.500H0.500Z" fill="#ffe792" stroke="#e0bb4f" /><circle cx="11" cy="11" r="4.500" fill="#dfe4e6" stroke="#6d7478" /><path d="M11 11L13 8.500M11 11H13.500" stroke="#444" /><path d="M10 5Q4 6 4.500 10.500L2.500 10L5 14.500L8.500 11L7 10.800Q7 8 10 7Z" fill="#22a52b" /></S>
);
const SelAll = () => (
  <S><rect x="0.500" y="0.500" width="15" height="15" fill="#b7e0fa" stroke="#2f93dc" /><path d="M8 0V16M0 8H16" stroke="#2f93dc" strokeWidth="2" /></S>
);
const SelNone = () => (
  <S><path d="M1.500 1.500H6.500V6.500H1.500ZM9.500 1.500H14.500V6.500H9.500ZM1.500 9.500H6.500V14.500H1.500ZM9.500 9.500H14.500V14.500H9.500Z" fill="#fff" stroke="#a3a3a3" /></S>
);
const SelInv = () => (
  <S><path d="M1.500 1.500H6.500V6.500H1.500ZM9.500 9.500H14.500V14.500H9.500Z" fill="#fff" stroke="#a3a3a3" /><path d="M8.500 0.500H15.500V7.500H8.500ZM0.500 8.500H7.500V15.500H0.500Z" fill="#b7e0fa" stroke="#2f93dc" /></S>
);
const Star = () => <S><path d="M9.500 1L10.500 6L15.500 6.500L11.500 9.500L13 14.500L8.500 11.500L4 15L5.500 10L2 7.500L7 6Z" fill="#2a8fdc" /><path d="M5 2.500H8M3 4.500H7M0 9.500H4M1 12.500H4" stroke="#63b4ee" /></S>;
const DesktopI = () => <S><rect x="0.500" y="2.500" width="15" height="11" fill="#25a0f5" stroke="#1277c8" /><path d="M1 12.500H15" stroke="#0d5ea5" /></S>;
const Download = () => <S><path d="M5.500 0.500H10.500V8H15.500L8 15.500L0.500 8H5.500Z" fill="#3291e4" /></S>;
const DocI = () => <S><path d="M2.500 0.500H10.500L13.500 3.500V15.500H2.500Z" fill="#fff" stroke="#7f8b94" /><path d="M4 5.500H8M6 3.500H9M9 7.500H12M4 8.500H8M4 10.500H12M4 12.500H8" stroke="#2b83c6" /><path d="M9 12.500H12" stroke="#23445f" /></S>;
const PicI = () => <S><rect x="0.500" y="2.500" width="15" height="11" fill="#fff" stroke="#8f8f8f" /><rect x="2" y="4" width="12" height="8" fill="#8fc3ee" /><path d="M2 8Q7 7 14 11V12H2Z" fill="#2f5f5a" /></S>;
const Wps = () => <S><path d="M4 13Q1 13 1 10Q1 7 4 6.500Q5 3 8 3Q12 3 12.500 6.500Q15 7.500 15 10.500Q15 13 12 13.500H5Z" fill="#1b6ff2" /><path d="M4 13.500Q1 13 1 10Q1 7 4 6.500Q8 7 10 13.500Z" fill="#27e0d6" /></S>;
const OneDrive = () => <S><path d="M0.500 10Q1 7 4 6.500Q6 3 10 4Q12.500 5 12.500 7Q15.500 8 15.500 10.500Q15.500 13.500 12 13.500H3Q0 13.500 0.500 10Z" fill="#0d66b8" /><path d="M2 13Q6 8.500 12 7Q15.500 8 15.500 10.500Q15.500 13.500 12 13.500H3Z" fill="#28a0e8" /></S>;
const PcI = () => <S><rect x="0.500" y="1.500" width="15" height="10" fill="#5cbcf8" stroke="#2e6e99" /><path d="M5 13.500H11M1 15.500H15" stroke="#8298a6" /></S>;
const Cube = () => <S><path d="M0.500 3L8 0.500L15.500 3V14L8 16L0.500 14Z" fill="#55d3e2" /><path d="M5 4.500L15.500 3V14L8 16H5Z" fill="#1890b8" /><path d="M0.500 3L5 4.500V16L0.500 14Z" fill="#9cebf2" /></S>;

/* ---------- explorer ---------- */

type NavItem = { icon: React.ReactNode; label: string; child?: boolean; pin?: boolean; gap?: boolean };
type FileRow = { icon: React.ReactNode; name: string; date?: string; type?: string };
type WindowProps = {
  frame: string; title: string; compact?: boolean; crumbs: string[]; lead: React.ReactNode; nav: NavItem[]; navPad: string;
  thumb: string; hThumb: string; nameCol: string; files: FileRow[]; count: string; sorted?: boolean;
};

const BigBtn = ({ icon, lines, className, muted, caret }: { icon: React.ReactNode; lines: string[]; className: string; muted?: boolean; caret?: boolean }) => (
  <button className={`flex shrink-0 flex-col items-center pt-2 leading-[17px] ${className} ${muted ? "text-[#7c7c7c]" : "text-[#222]"}`}>
    <span className="mb-1 flex h-[30px] items-center">{icon}</span>
    {lines.map((l) => <span key={l} className="whitespace-nowrap">{l}</span>)}
    {caret && <Caret />}
  </button>
);

const Cmd = ({ icon, label, className, muted, caret, hideLabel }: { icon: React.ReactNode; label: string; className: string; muted?: boolean; caret?: "muted" | "dark"; hideLabel?: boolean }) => (
  <button aria-label={label} className={`flex items-center gap-[3px] whitespace-nowrap ${className} ${muted ? "text-[#7c7c7c]" : "text-[#222]"}`}>
    {icon}
    {!hideLabel && <span>{label}</span>}
    {caret && <span className="pl-0.5"><Caret muted={caret === "muted"} /></span>}
  </button>
);

const Group = ({ label, width, children }: { label: string; width: string; children: React.ReactNode }) => (
  <section className={`flex shrink-0 flex-col ${width}`} aria-label={label}>
    <div className="flex h-[86px]">{children}</div>
    <div className="text-center leading-[17px] text-[#4a4a4a]">{label}</div>
  </section>
);
const Sep = () => <div className="my-[3px] w-px shrink-0 bg-[#dfe0e2]" />;

function Ribbon({ compact }: { compact?: boolean }) {
  return (
    <div className="flex h-[108px] border-b border-[#dadbdc] bg-[#f5f6f7]">
      <Group label="剪贴板" width={compact ? "w-[171px]" : "w-[254px]"}>
        <BigBtn className="w-[63px]" icon={<Pin className="h-[22px] w-[22px]" />} lines={["固定到快", "速访问"]} />
        <BigBtn className="w-[34px]" muted icon={<CopyTwo className="h-[30px] w-[26px]" />} lines={["复制"]} />
        <div className="flex w-[49px] shrink-0 flex-col">
          <BigBtn className="w-full" icon={<Clipboard />} lines={["粘贴"]} />
          <Cmd className="mt-1 ml-[7px] h-[17px]" muted icon={<Scissors />} label="剪切" hideLabel={compact} />
        </div>
        <div className={`flex flex-col pt-1 ${compact ? "" : "pl-2"}`}>
          <Cmd className="h-[22px]" muted icon={<PathIcon />} label="复制路径" hideLabel={compact} />
          <Cmd className="h-[22px]" muted icon={<PasteLink />} label="粘贴快捷方式" hideLabel={compact} />
        </div>
      </Group>
      <Sep />
      <Group label="组织" width="w-[153px]">
        <div className="flex w-20 flex-col pt-[10px] pl-2">
          <Cmd className="h-[33px]" muted caret="muted" icon={<MoveTo />} label="移动到" />
          <Cmd className="h-[33px]" muted caret="muted" icon={<CopyTo />} label="复制到" />
        </div>
        <div className="mt-[15px] h-[55px] w-px bg-[#dfe0e2]" />
        <div className="flex flex-col pt-[10px] pl-1.5">
          <Cmd className="h-[33px]" muted caret="dark" icon={<Cross />} label="删除" />
          <Cmd className="h-[33px]" muted icon={<Rename />} label="重命名" />
        </div>
      </Group>
      <Sep />
      <Group label="新建" width="w-[81px]">
        <BigBtn className="w-[46px]" icon={<BigFolder />} lines={["新建", "文件夹"]} />
        <div className="flex flex-col pt-1 pl-0.5">
          <button aria-label="新建项目" className="flex h-[22px] items-center gap-0.5"><NewItem /><Caret /></button>
          <button aria-label="轻松访问" className="flex h-[22px] items-center gap-0.5"><EasyAccess /><Caret /></button>
        </div>
      </Group>
      <Sep />
      <Group label="打开" width={compact ? "w-[84px]" : "w-[127px]"}>
        <BigBtn className="w-[50px]" caret icon={<BigCheck />} lines={["属性"]} />
        <div className="flex flex-col pt-[6px]">
          <Cmd className="h-[25px]" muted caret="muted" icon={<OpenI />} label="打开" hideLabel={compact} />
          <Cmd className="h-[25px]" muted icon={<EditI />} label="编辑" hideLabel={compact} />
          <Cmd className="h-[25px]" icon={<History />} label="历史记录" hideLabel={compact} />
        </div>
      </Group>
      <Sep />
      <Group label="选择" width="w-[84px]">
        <div className="flex flex-col pt-1 pl-1.5">
          <Cmd className="h-[22px]" icon={<SelAll />} label="全部选择" />
          <Cmd className="h-[22px]" icon={<SelNone />} label="全部取消" />
          <Cmd className="h-[22px]" icon={<SelInv />} label="反向选择" />
        </div>
      </Group>
      <Sep />
    </div>
  );
}

function Explorer(p: WindowProps) {
  return (
    <section className={`absolute flex flex-col overflow-hidden border border-[#2b4a6b] bg-white shadow-[0_3px_12px_rgba(0,0,0,0.5)] ${p.frame}`} aria-label={p.title}>
      <header className="flex h-[30px] shrink-0 items-center bg-[#003f80] pl-[9px] text-[#8ea4bf]">
        <Folder />
        <span className="ml-1 h-3 w-[3px] border-x border-[#5f7fa3]" />
        <button aria-label="属性" className="ml-[9px]"><Page /></button>
        <button aria-label="新建文件夹" className="ml-1.5"><Folder /></button>
        <button aria-label="自定义快速访问工具栏" className="ml-1.5">
          <svg className="h-[7px] w-[7px]" viewBox="0 0 7 7" aria-hidden="true"><path d="M0 0.500H7" stroke="#0b0b0b" /><path d="M0 1.500H7" stroke="#9fb4cc" strokeWidth="0.600" /><path d="M0 3H7L3.500 6.500Z" fill="#0b0b0b" /></svg>
        </button>
        <span className="ml-[7px] h-3 w-[3px] border-x border-[#5f7fa3]" />
        <h1 className="ml-1.5 text-[13px] font-normal">{p.title}</h1>
        <div className="ml-auto flex h-full">
          <button aria-label="最小化" className="flex w-[46px] items-center justify-center"><span className="h-px w-[10px] bg-[#7f99b8]" /></button>
          <button aria-label="最大化" className="flex w-[46px] items-center justify-center"><span className="h-[10px] w-[10px] border border-[#7f99b8]" /></button>
          <button aria-label="关闭" className="flex w-[46px] items-center justify-center"><svg className="h-[10px] w-[10px]" viewBox="0 0 10 10" aria-hidden="true"><path d="M0 0L10 10M10 0L0 10" stroke="#7f99b8" /></svg></button>
        </div>
      </header>

      <nav className="flex h-[27px] shrink-0 border-b border-[#dadbdc] text-[#333]">
        <button className="h-[23px] w-14 bg-[#0063b1] text-white">文件</button>
        <button className="-mb-px w-[52px] border border-b-0 border-[#dadbdc] bg-[#f5f6f7]">主页</button>
        <button className="w-[54px]">共享</button>
        <button className="w-[52px]">查看</button>
        <div className="ml-auto flex items-center gap-[10px] pr-[3px]">
          <button aria-label="折叠功能区" className="text-[#8f8f8f]"><Chev d="up" className="h-[10px] w-[10px]" w="1" /></button>
          <button aria-label="帮助" className="flex h-4 w-4 items-center justify-center rounded-full bg-[#0063c0] text-[11px] font-bold text-white ring-1 ring-[#0a4a8c]/60 ring-inset">?</button>
        </div>
      </nav>

      <Ribbon compact={p.compact} />

      <div className={`flex h-[43px] shrink-0 items-start pt-[5px] pl-1.5 ${p.compact ? "pr-3" : "pr-[11px]"}`}>
        <div className="mr-1 flex h-[31px] items-center gap-1.5 text-[#d3d3d3]">
          <button aria-label="后退" className="flex w-6 justify-center"><S className="h-[14px] w-[14px]"><path d="M2 8H15M7.500 2.500L2 8L7.500 13.500" stroke="currentColor" strokeWidth="1.600" /></S></button>
          <button aria-label="前进" className="flex w-6 justify-center"><S className="h-[14px] w-[14px]"><path d="M1 8H14M8.500 2.500L14 8L8.500 13.500" stroke="currentColor" strokeWidth="1.600" /></S></button>
          <button aria-label="最近浏览的位置" className="flex w-[10px] justify-center"><Chev d="down" /></button>
          <button aria-label="上移" className="flex w-5 justify-center text-[#6b6b6b]"><S className="h-[14px] w-[14px]"><path d="M8 15V2M2.500 7.500L8 2L13.500 7.500" stroke="currentColor" strokeWidth="2" /></S></button>
        </div>
        <div className="flex h-[31px] min-w-0 flex-1 items-center border border-[#d9d9d9] pl-[3px] text-[#111]">
          <Folder />
          <span className="flex w-[21px] justify-center text-[#555]">{p.lead}</span>
          {p.crumbs.map((c, i) => (
            <React.Fragment key={c}>
              {i > 0 && <span className="flex w-[26px] justify-center text-[#666]"><Chev d="right" /></span>}
              <button className="whitespace-nowrap">{c}</button>
            </React.Fragment>
          ))}
          <button aria-label="上一个位置" className="ml-auto flex w-7 justify-center text-[#666]"><Chev d="down" className="h-[11px] w-[11px]" /></button>
          <button aria-label="刷新" className="flex h-full w-[31px] items-center justify-center border-l border-[#d9d9d9] text-[#666]">
            <RotateCw className="h-3 w-3" strokeWidth={3} />
          </button>
        </div>
        <label className="ml-3 flex h-[31px] w-[98px] items-center border border-[#d9d9d9] pr-2">
          <input type="search" aria-label="搜索" className="min-w-0 flex-1 bg-transparent px-1 outline-none" />
          <S className="h-3 w-3"><circle cx="10" cy="6" r="4.800" stroke="#666" strokeWidth="1.800" /><path d="M6.500 9.500L1 15" stroke="#666" strokeWidth="2.500" /></S>
        </label>
      </div>

      <div className="flex min-h-0 flex-1">
        <div className={`w-[239px] shrink-0 overflow-hidden ${p.navPad}`}>
          {p.nav.map((n) => (
            <button key={n.label} className={`flex h-6 w-full items-center pr-1 text-left ${n.child ? "gap-1.5 pl-8" : "gap-[5px] pl-6"} ${n.gap ? "mt-2" : ""}`}>
              {n.icon}
              <span className="flex-1 text-black">{n.label}</span>
              {n.pin && <Pin className="h-3 w-3" />}
            </button>
          ))}
        </div>
        <div className="flex w-4 shrink-0 flex-col items-center bg-[#f0f0f0] text-[#505050]" aria-hidden="true">
          <span className="flex h-[17px] items-center"><Chev d="up" className="h-[10px] w-[10px]" w="1.8" /></span>
          <span className={`w-full bg-[#cdcdcd] ${p.thumb}`} />
          <span className="mt-auto flex h-[17px] items-center"><Chev d="down" className="h-[10px] w-[10px]" w="1.8" /></span>
        </div>
        <div className="ml-0.5 flex min-w-0 flex-1 flex-col border-l border-[#ececec]">
          <div className="relative min-h-0 flex-1 overflow-hidden">
            {p.sorted && <Chev d="up" w="1" className="absolute top-0 left-[138px] h-[9px] w-[9px] text-[#777]" />}
            <table className="w-[496px] table-fixed border-collapse text-left text-[#6d6d6d]">
              <colgroup><col className={p.nameCol} /><col className="w-36" /><col /></colgroup>
              <thead>
                <tr className="align-top text-[#44597b]">
                  <th className="h-[33px] p-0 font-normal"><div className={`flex h-[27px] items-center pl-[18px] ${p.sorted ? "border-r border-[#e5e5e5]" : ""}`}>名称</div></th>
                  {p.sorted && <th className="p-0 font-normal"><div className="flex h-[27px] items-center border-r border-[#e5e5e5] pl-[7px]">修改日期</div></th>}
                  {p.sorted && <th className="p-0 font-normal"><div className="flex h-[27px] items-center pl-[7px]">类型</div></th>}
                </tr>
              </thead>
              <tbody>
                {p.files.map((f) => (
                  <tr key={f.name} className="h-[21px] whitespace-nowrap">
                    <td className="p-0"><div className="flex items-center gap-[3px] pl-5 text-black">{f.icon}{f.name}</div></td>
                    {f.date && <td className="p-0 pl-[7px]">{f.date}</td>}
                    {f.type && <td className="p-0 pl-[7px]">{f.type}</td>}
                  </tr>
                ))}
              </tbody>
            </table>
          </div>
          <div className="flex h-4 items-center bg-[#f0f0f0] text-[#505050]" aria-hidden="true">
            <span className="flex w-[18px] justify-center"><Chev d="left" className="h-[10px] w-[10px]" w="1.8" /></span>
            <span className="h-full flex-1"><span className={`block h-[15px] bg-[#cdcdcd] ${p.hThumb}`} /></span>
            <span className="flex w-[17px] justify-center"><Chev d="right" className="h-[10px] w-[10px]" w="1.8" /></span>
          </div>
        </div>
      </div>

      <footer className="flex h-[23px] shrink-0 items-center pl-[14px] text-[#1e395b]">
        <span className="border-r border-[#eee] pr-[10px] leading-3">{p.count}</span>
        <button aria-label="详细信息" className="ml-auto flex h-[23px] w-[22px] items-center justify-center border border-[#3ba0d8] bg-[#cce8f6]">
          <S><path d="M0.500 1.500H4.500V5.500H0.500ZM0.500 5.500H4.500V9.500H0.500ZM0.500 9.500H4.500V13.500H0.500Z" fill="#fff" stroke="#8a8a8a" /><path d="M2 3.500H3M2 11.500H3" stroke="#d33" /><path d="M6 3.500H9M11 3.500H15M6 7.500H9M11 7.500H15M6 11.500H9M11 11.500H15" stroke="#5f5f5f" /></S>
        </button>
        <button aria-label="大缩略图" className="mr-[7px] ml-[3px] flex items-center"><PicI /></button>
      </footer>
    </section>
  );
}

/* ---------- arrows drawn over the desktop ---------- */

const arrows = [
  "236,61 608,312 613.7,306 626,333 596,331 600.7,324",
  "214,152 573,399 578.7,393 591,420 561,416.7 565,411",
  "226,265 563.7,428 567,421 584,446 554,448 557,441.7",
  "228,382 422,382 422,379 436,387 422,394 422,391",
  "1744,59 714,466 710.7,460 694,483 723,487 720.7,480",
  "1852,79 1460,439 1454.6,433 1445.4,462 1475,455 1470,449",
];

export default function App() {
  return (
    <main className="relative h-screen w-full overflow-hidden bg-[#001531] font-['Noto_Sans','Noto_Sans_CJK_SC',sans-serif] text-xs">
      <Wallpaper />
      <div className="relative grid grid-cols-[repeat(25,76px)] grid-rows-[repeat(10,101px)] pt-[5px]">
        {desk.map((d) => <DesktopIcon key={d.lines.join() + d.icon} item={d} />)}
      </div>

      <Explorer
        frame="left-[314px] top-[164px] h-[500px] w-[709px]"
        title="data"
        crumbs={["此电脑", "本地磁盘 (E:)", "ITCode", "Project", "data"]}
        lead={<Chev d="right" />}
        navPad="pt-4"
        nav={[
          { icon: <Star />, label: "快速访问" },
          { icon: <Folder />, label: "2345Downloads", child: true },
          { icon: <DesktopI />, label: "桌面", child: true, pin: true },
          { icon: <Download />, label: "下载", child: true, pin: true },
          { icon: <DocI />, label: "文档", child: true, pin: true },
          { icon: <PicI />, label: "图片", child: true, pin: true },
          { icon: <Wps />, label: "WPS云盘", gap: true },
          { icon: <OneDrive />, label: "OneDrive", gap: true },
          { icon: <OneDrive />, label: "OneDrive - Personal", gap: true },
        ]}
        thumb="h-[86px]"
        hThumb="w-[71%]"
        nameCol="w-[272px]"
        sorted
        files={[
          { icon: <Folder />, name: "1 UI", date: "2025/9/15 星期一 14:...", type: "文件夹" },
          { icon: <Folder />, name: "2 工作计划", date: "2025/9/15 星期一 14:...", type: "文件夹" },
          { icon: <Folder />, name: "IMChat^10.7.1 node_modules", date: "2025/4/15 星期二 15:...", type: "文件夹" },
          { icon: <TxtFile />, name: "code.txt", date: "2025/7/8 星期二 16:33", type: "文本文档" },
          { icon: <HtmlFile />, name: "index.html", date: "2023/6/15 星期四 12:...", type: "Chrome HTML" },
          { icon: <TxtFile />, name: "说明.txt", date: "2025/9/15 星期一 15:...", type: "文本文档" },
        ]}
        count="6 个项目"
      />

      <Explorer
        frame="left-[1089px] top-[165px] h-[498px] w-[620px]"
        title="Data"
        compact
        crumbs={["本地磁盘 (E:)", "ITCode", "Data"]}
        lead={<span>«</span>}
        navPad="pt-0"
        nav={[
          { icon: <Folder />, label: "2345Downloads", child: true, pin: true },
          { icon: <DesktopI />, label: "桌面", child: true, pin: true },
          { icon: <Download />, label: "下载", child: true, pin: true },
          { icon: <DocI />, label: "文档", child: true, pin: true },
          { icon: <PicI />, label: "图片", child: true, pin: true },
          { icon: <Wps />, label: "WPS云盘", gap: true },
          { icon: <OneDrive />, label: "OneDrive", gap: true },
          { icon: <OneDrive />, label: "OneDrive - Personal", gap: true },
          { icon: <PcI />, label: "此电脑", gap: true },
          { icon: <Cube />, label: "3D 对象", child: true },
        ]}
        thumb="mt-[11px] h-[85px]"
        hThumb="w-[49%]"
        nameCol="w-[352px]"
        files={[
          { icon: <Folder />, name: "公司资料" },
          { icon: <Folder />, name: "人力资源" },
          { icon: <TxtFile />, name: "data.txt" },
        ]}
        count="3 个项目"
      />

      <svg className="pointer-events-none absolute inset-0 h-full w-full" viewBox="0 0 1925 1042" preserveAspectRatio="none" aria-hidden="true">
        {arrows.map((a) => <polygon key={a} points={a} fill="#fb3836" />)}
      </svg>
    </main>
  );
}
